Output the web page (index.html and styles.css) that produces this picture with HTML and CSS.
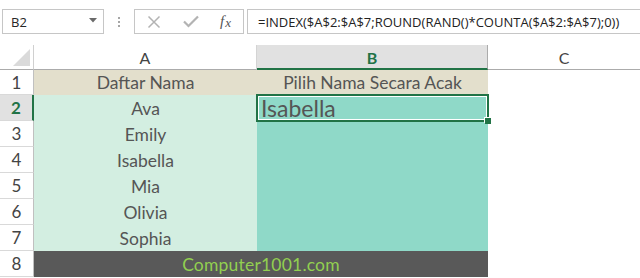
FILE: index.html
```html
<!DOCTYPE html>
<html lang="id">
<head>
<meta charset="utf-8">
<title>Excel - Pilih Nama Secara Acak</title>
<link rel="stylesheet" href="styles.css">
</head>
<body>
<div class="fbar">
  <div class="namebox">
    <span class="nb-text">B2</span>
    <svg class="nb-arrow" width="8" height="5" viewBox="0 0 8 5"><path d="M0 0H8L4 4.5Z" fill="#6a6a6a"/></svg>
  </div>
  <div class="grip"><i></i><i></i><i></i></div>
  <div class="btns">
    <svg class="ic-x" width="14" height="14" viewBox="0 0 14 14"><path d="M1.5 1.5L12.5 12.5M12.5 1.5L1.5 12.5" stroke="#b3b3b3" stroke-width="1.5" fill="none"/></svg>
    <svg class="ic-ok" width="16" height="13" viewBox="0 0 16 13"><path d="M1 6.5L5.5 11L15 1.5" stroke="#b3b3b3" stroke-width="2.2" fill="none"/></svg>
    <span class="fx"><i>f</i><span class="fx-x">x</span></span>
  </div>
  <div class="formula">=INDEX($A$2:$A$7;ROUND(RAND()*COUNTA($A$2:$A$7);0))</div>
</div>

<div class="sheet">
  <div class="corner"><div class="tri"></div></div>
  <div class="colhead">A</div>
  <div class="colhead sel">B</div>
  <div class="colhead last">C</div>

  <div class="rowhead">1</div>
  <div class="cell title">Daftar Nama</div>
  <div class="cell title">Pilih Nama Secara Acak</div>
  <div class="cell blank"></div>

  <div class="rowhead sel">2</div>
  <div class="cell name">Ava</div>
  <div class="cell pick active">Isabella</div>
  <div class="cell blank"></div>

  <div class="rowhead">3</div>
  <div class="cell name">Emily</div>
  <div class="cell pick"></div>
  <div class="cell blank"></div>

  <div class="rowhead">4</div>
  <div class="cell name">Isabella</div>
  <div class="cell pick"></div>
  <div class="cell blank"></div>

  <div class="rowhead">5</div>
  <div class="cell name">Mia</div>
  <div class="cell pick"></div>
  <div class="cell blank"></div>

  <div class="rowhead">6</div>
  <div class="cell name">Olivia</div>
  <div class="cell pick"></div>
  <div class="cell blank"></div>

  <div class="rowhead">7</div>
  <div class="cell name">Sophia</div>
  <div class="cell pick"></div>
  <div class="cell blank"></div>

  <div class="rowhead">8</div>
  <div class="cell banner">Computer1001.com</div>
  <div class="cell blank"></div>
</div>
</body>
</html>
```
FILE: styles.css
```css
* { box-sizing: border-box; }
html, body { margin: 0; padding: 0; background: #fff; }
body { width: 640px; height: 278px; overflow: hidden; font-family: "Lato", "Open Sans", sans-serif; }

/* formula bar */
.fbar {
  display: flex;
  align-items: stretch;
  padding-top: 9px;
  height: 34px;
}
.namebox {
  margin-left: 2px;
  width: 102px;
  border: 1px solid #c6c6c6;
  display: flex;
  align-items: center;
  justify-content: space-between;
  padding: 0 6px 0 8px;
  font-family: "Open Sans", sans-serif;
  font-size: 13px;
  color: #262626;
}
.nb-arrow { margin-top: -2px; }
.grip {
  width: 30px;
  display: flex;
  flex-direction: column;
  align-items: center;
  justify-content: center;
  gap: 2px;
}
.grip i { display: block; width: 2px; height: 2px; background: #a6a6a6; }
.btns {
  width: 110px;
  border: 1px solid #c6c6c6;
  display: flex;
  align-items: center;
  padding-left: 12px;
}
.ic-x { margin-right: 22px; }
.ic-ok { margin-right: 21px; }
.fx {
  font-family: "Liberation Serif", serif;
  font-size: 15px;
  color: #555;
  display: flex;
  align-items: baseline;
}
.fx i { font-style: italic; }
.fx-x { font-style: italic; font-size: 13px; margin-left: 1px; position: relative; top: 1px; }
.formula {
  flex: 1;
  margin-left: 3px;
  border: 1px solid #c6c6c6;
  border-right: none;
  display: flex;
  align-items: center;
  padding-left: 10px;
  font-family: "Open Sans", sans-serif;
  font-size: 13px;
  color: #222;
  white-space: nowrap;
  overflow: hidden;
}

/* sheet grid */
.sheet {
  margin-top: 11px;
  display: grid;
  grid-template-columns: 34px 223px 231px 1fr;
  grid-template-rows: 25px 25px repeat(7, 26px);
}
.corner {
  border-right: 1px solid #d0d0d0;
  border-bottom: 1px solid #ababab;
  display: flex;
  justify-content: flex-end;
  align-items: flex-end;
  padding: 0 3px 3px 0;
}
.tri {
  width: 17px;
  height: 17px;
  background: #dadada;
  clip-path: polygon(100% 0, 100% 100%, 0 100%);
}
.colhead {
  border-bottom: 1px solid #ababab;
  border-right: 1px solid #d4d4d4;
  display: flex;
  align-items: center;
  justify-content: center;
  font-size: 16px;
  color: #444;
  padding-top: 1px;
}
.colhead.sel {
  background: #e1e1e1;
  border-bottom: 2px solid #217346;
  border-right-color: #ababab;
  color: #217346;
  font-weight: bold;
}
.colhead.last { border-right: none; }

.rowhead {
  border-right: 1px solid #c0c0c0;
  border-bottom: 1px solid #d9d9d9;
  display: flex;
  align-items: center;
  justify-content: center;
  font-size: 17px;
  color: #444;
}
.rowhead.sel {
  background: #e1e1e1;
  border-right: 2px solid #217346;
  color: #217346;
  font-weight: bold;
}

.cell {
  display: flex;
  align-items: center;
  justify-content: center;
  font-size: 17.5px;
  color: #555;
  white-space: nowrap;
}
.title { background: #e3dfcc; }
.name { background: #d3eee1; }
.pick { background: #8fd9c8; }
.blank { background: #fff; }
.active {
  position: relative;
  justify-content: flex-start;
  padding-left: 4px;
  font-size: 23px;
}
.active::before {
  content: "";
  position: absolute;
  top: -1px; left: -1px; right: -1px; bottom: -1px;
  border: 2px solid #217346;
  box-shadow: inset 0 0 0 1px #fff;
}
.active::after {
  content: "";
  position: absolute;
  right: -3px; bottom: -3px;
  width: 6px; height: 6px;
  background: #217346;
  box-shadow: -1px -1px 0 0 #fff;
}
.banner {
  grid-column: span 2;
  background: #595959;
  color: #92d050;
  font-size: 17.5px;
  letter-spacing: 0.2px;
}
```
